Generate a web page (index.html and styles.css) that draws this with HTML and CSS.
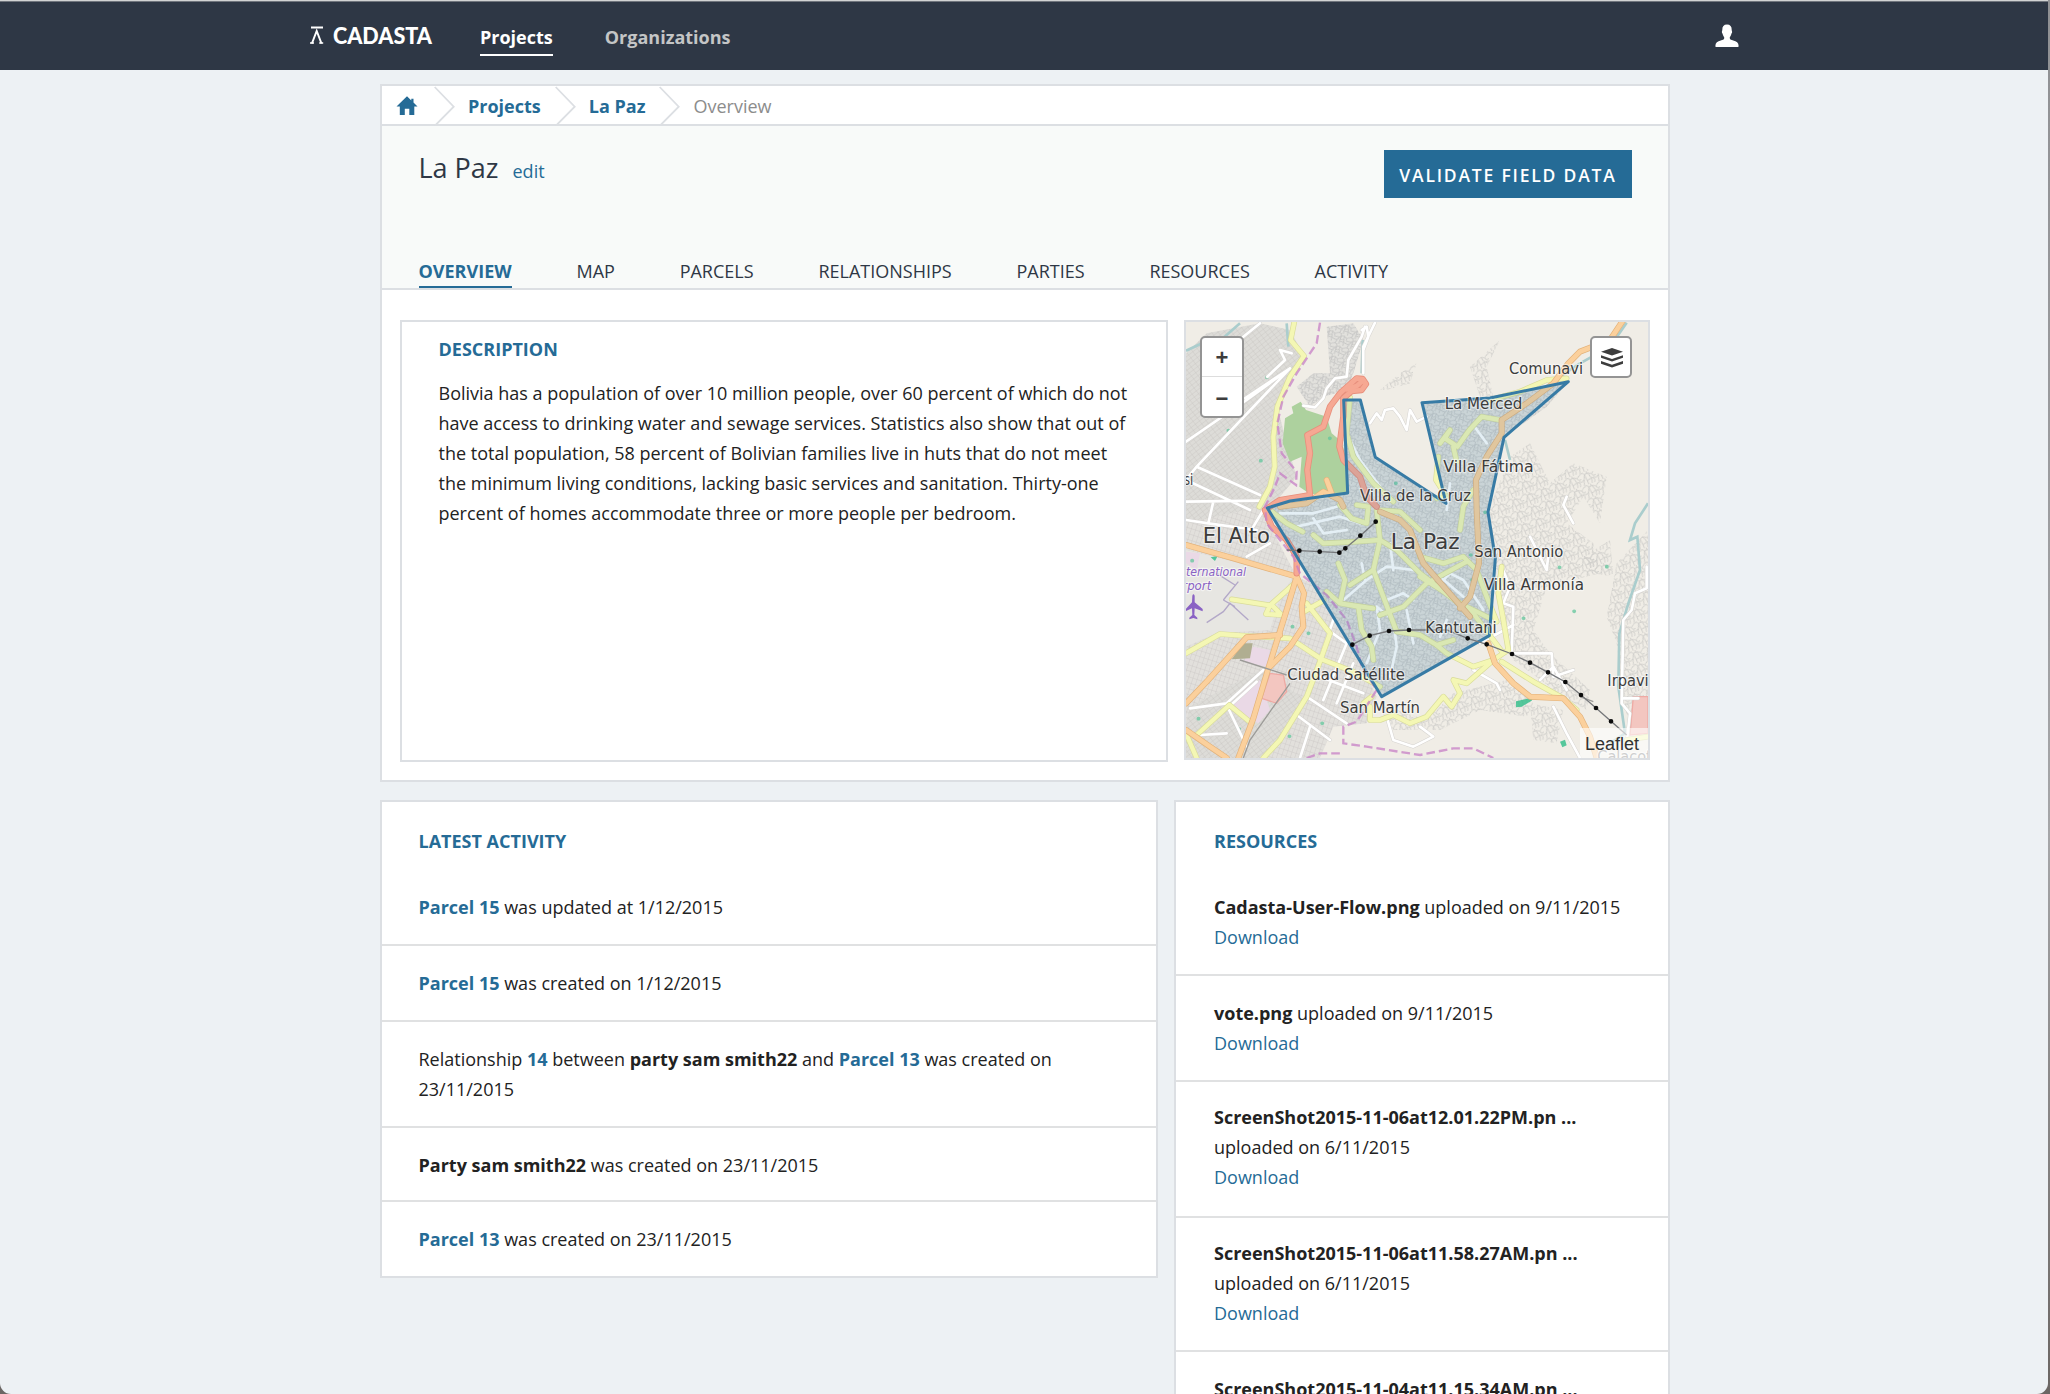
FILE: index.html
```
<!DOCTYPE html>
<html lang="en">
<head>
<meta charset="utf-8">
<title>La Paz - Cadasta</title>
<link rel="stylesheet" href="styles.css">
</head>
<body>
<div class="window">
  <header class="topbar">
    <svg class="logo" viewBox="0 0 124 20" width="124" height="20">
      <path d="M1 2.600h12" stroke="#fff" stroke-width="2" fill="none"/>
      <path d="M1.900 18.500L6.700 6L11.500 18.500" stroke="#fff" stroke-width="2" fill="none"/>
      <path d="M0 18h4M9.200 18h4" stroke="#fff" stroke-width="1.400" fill="none"/>
      <text x="23" y="18.500" textLength="99" lengthAdjust="spacingAndGlyphs" class="logo-text">CADASTA</text>
    </svg>
    <nav class="topnav">
      <a class="topnav-link active">Projects</a>
      <a class="topnav-link">Organizations</a>
    </nav>
    <svg class="user" viewBox="0 0 24 24" width="24" height="24">
      <path fill="#fff" d="M12 .5c3.200 0 4.800 2 4.700 5.300 0 1 .5 1.200.4 2.400-.1 1-.7 1.200-.9 2.200-.3 1.500-1.600 2.300-1.500 3.700.1 1.700 1.700 2 3.500 2.400 3.300.700 5.400 2.300 5.400 5.200 0 .9-.2 1.300-.8 1.300H1.200c-.6 0-.8-.4-.8-1.300 0-2.900 2.100-4.500 5.400-5.200 1.800-.4 3.400-.7 3.500-2.400.1-1.400-1.200-2.200-1.500-3.700-.2-1-.8-1.200-.9-2.200-.1-1.200.4-1.400.4-2.400C7.200 2.500 8.800.5 12 .5z"/>
    </svg>
  </header>

  <main class="page">
    <section class="panel">
      <nav class="crumbs">
        <svg class="home" viewBox="0 0 22 20" width="22" height="20"><path fill="#256b96" d="M11 .3l4.300 4.100V2.800h2.200v3.700L21.500 10.500h-3.200V19h-5v-6.200H8.800V19H3.800v-8.500H.5z"/></svg>
        <svg class="chev" viewBox="0 0 21 40" width="21" height="40"><path d="M.7 1L19.700 20.700L.7 40" fill="none" stroke="#dcdfe3" stroke-width="1.800"/></svg>
        <a class="crumb">Projects</a>
        <svg class="chev" viewBox="0 0 21 40" width="21" height="40"><path d="M.7 1L19.700 20.700L.7 40" fill="none" stroke="#dcdfe3" stroke-width="1.800"/></svg>
        <a class="crumb">La Paz</a>
        <svg class="chev" viewBox="0 0 21 40" width="21" height="40"><path d="M.7 1L19.700 20.700L.7 40" fill="none" stroke="#dcdfe3" stroke-width="1.800"/></svg>
        <span class="crumb-current">Overview</span>
      </nav>
      <div class="project-head">
        <div class="title-row">
          <h1 class="title">La Paz<a class="edit">edit</a></h1>
          <a class="btn">VALIDATE FIELD DATA</a>
        </div>
        <nav class="tabs">
          <a class="tab active">OVERVIEW</a><a class="tab">MAP</a><a class="tab">PARCELS</a><a class="tab">RELATIONSHIPS</a><a class="tab">PARTIES</a><a class="tab">RESOURCES</a><a class="tab">ACTIVITY</a>
        </nav>
      </div>
      <div class="overview">
        <div class="description">
          <h2 class="heading">DESCRIPTION</h2>
          <p class="copy">Bolivia has a population of over 10 million people, over 60 percent of which do not<br>have access to drinking water and sewage services. Statistics also show that out of<br>the total population, 58 percent of Bolivian families live in huts that do not meet<br>the minimum living conditions, lacking basic services and sanitation. Thirty-one<br>percent of homes accommodate three or more people per bedroom.</p>
        </div>
        <div class="map">
          <svg class="map-canvas" viewBox="18 36 1386 1308" width="462" height="436">
            <defs>
              <pattern id="gridA" width="16" height="11" patternUnits="userSpaceOnUse" patternTransform="rotate(-38)"><rect width="16" height="11" fill="#dddcd8"/><path d="M0 0H16M0 0V11" stroke="#c4c3c0" stroke-width="2"/></pattern>
              <pattern id="gridB" width="13" height="17" patternUnits="userSpaceOnUse" patternTransform="rotate(18)"><rect width="13" height="17" fill="#e2e0dc"/><path d="M0 0H13M0 0V17" stroke="#c6c5c2" stroke-width="2"/></pattern>
              <pattern id="gridC" width="62" height="54" patternUnits="userSpaceOnUse" patternTransform="rotate(24) scale(.62)"><rect width="62" height="54" fill="#e2e1dd"/><path d="M0 4L14 0L20 12L34 8L48 14L62 4M6 54L10 34L20 12L24 54M10 34L0 40M62 40L42 36L24 40M14 0L18 0M34 8L42 36L46 54M48 14L54 28L62 24M0 24L16 22M24 30L38 24" stroke="#c3c3c1" stroke-width="4" fill="none"/></pattern>
              <pattern id="gridD" width="76" height="66" patternUnits="userSpaceOnUse" patternTransform="rotate(-20) scale(.6)"><path d="M0 6L16 2L22 14L40 10L58 20L76 6M4 66L12 38L22 14L28 66M12 38L0 44M76 44L50 40L28 46M40 10L50 40L46 66M58 20L64 34L76 30M33 12L36 0M60 66L64 50L56 42" stroke="#cfcdca" stroke-width="4.500" fill="none"/></pattern>
              <g id="yellow-roads">
                <path d="M344 30L332 90L372 138L330 200L292 290L280 380L284 470L270 530L238 590"/>
                <path d="M18 1030L120 972L205 978L330 985L425 1048L520 1085L600 1130"/>
                <path d="M155 868L270 886L350 815M270 886L258 912L305 915L276 886M372 905L430 872"/>
                <path d="M380 880L450 970L418 1060L380 1160L300 1290L250 1344"/>
                <path d="M50 1275L148 1185L215 1240M18 1270L50 1344"/>
                <path d="M262 594L320 640L368 665M400 675L430 700L530 695L600 690L650 720L720 790L830 875L930 925"/>
                <path d="M510 262L500 370L520 440L580 520L640 575"/>
                <path d="M480 585L515 625L560 640L565 590L530 585M590 600L660 605L720 660M590 600L600 690L580 780L610 860L650 965L720 975L770 1005L820 990"/>
                <path d="M475 760L495 810L480 880L535 890L545 960L575 1010L580 1050M510 825L580 780M440 845L480 880L580 895M600 915L670 890L740 820L860 755"/>
                <path d="M780 400L810 360L795 385L832 410L868 360L905 320L960 330M820 410L830 455M775 440L768 510L800 560L770 565M880 540L850 590L840 660"/>
                <path d="M720 740L790 760L850 740L890 780L920 860L950 935"/>
                <path d="M720 800L800 850L880 910L970 1030M965 770L955 850L970 930L985 1020L940 1050L880 1070L800 1030L770 1005"/>
                <path d="M940 1050L860 1120L820 1110L840 1150L815 1190L790 1160L740 1220L690 1240L640 1215L600 1230L570 1230L570 1190L550 1180L575 1160"/>
                <path d="M965 1055L1060 1115L1150 1165L1190 1200M1340 1290L1404 1280"/>
                <path d="M930 270L1020 245L1100 210L1160 205"/>
              </g>
              <g id="orange-roads">
                <path d="M18 705L160 745L350 800L372 850L365 890L370 950L330 1010L270 1070"/>
                <path d="M350 800L320 900L265 1075L220 1225L175 1344"/>
                <path d="M18 1180L80 1115L200 982L300 975M18 1260L90 1310L140 1344"/>
                <path d="M300 590L380 580L430 545L480 570L490 590M440 510L455 550"/>
                <path d="M1330 30L1290 90L1200 125L1165 160L1120 220L1040 280L965 330L965 370L920 440L888 510L890 600L897 760L870 860L840 895"/>
                <path d="M600 605L660 630L690 660L730 760L800 840L870 920"/>
                <path d="M925 1000L945 1060L1000 1120L1050 1160L1150 1165L1200 1220L1230 1280L1250 1344"/>
              </g>
              <g id="red-roads">
                <path d="M390 555L382 480L390 430L382 375L430 350L450 290L480 250L530 205L548 207L558 222L545 240L515 243L490 265L490 320L478 410L490 450L540 500L560 560L590 590"/>
                <path d="M500 238L530 228L545 215"/>
                <path d="M390 555L300 570L255 600L275 650L320 690L350 740L350 790"/>
              </g>
              <g id="white-roads">
                <path d="M18 395L200 270L330 175L50 470L18 510M195 265L330 175M50 470L240 555M18 510L210 600M18 575L240 572M100 575L85 640L18 630M85 640L230 660M240 40L190 80M250 600L220 650M262 200L315 150L300 120L335 130"/>
                <path d="M555 50L545 80L505 150L500 200L465 205L440 235L430 265L405 292L370 287M545 60L560 50L565 80L550 120M585 38L550 110L550 190"/>
                <path d="M570 340L590 310L605 330L615 300L640 295L660 320L680 360L690 300L710 335L740 320"/>
                <path d="M30 1195L140 1180L250 1080M120 1215L230 1115M60 1275L140 1270M140 1185L200 1310M200 740L270 700"/>
                <path d="M460 930L380 1160M500 1000L430 1170M520 1060L470 1180M430 950L500 1000M420 1100L550 1150M380 1160L500 1240M350 1215L450 1290M390 1250L360 1344"/>
                <path d="M965 770L990 830L970 880L1000 890L995 1030M900 1000L1000 945M1400 770L1400 835L1365 850L1355 900L1330 930L1325 1180L1350 1210L1342 1280M1330 1165H1375"/>
                <path d="M880 1080L950 1120L960 1140M1000 1030L1115 1030L1120 1100L1180 1080M1080 1110L1120 1070L1160 1140M1120 1190L1160 1270L1200 1344M1160 560L1150 585L1180 640M1050 680L1100 780L1105 735"/>
                <path d="M720 1250L760 1280L720 1300M620 1220L640 1290L700 1310L720 1300"/>
              </g>
              <g id="city-roads">
                <path d="M500 320L505 380L540 450L600 530M300 610L400 610L470 590M350 650L480 620L540 640M490 870L560 810L620 770L700 780M590 890L600 960L560 1060M590 890L640 930L650 1010L630 1100M680 900L700 1000M780 820L810 790L850 810L910 900M880 345L920 400M800 600L810 520M640 780L630 700M400 625L430 670L500 660M555 810L545 760M620 870L670 850L700 870M780 800L850 860M800 930L780 980"/>
              </g>
            </defs>
            <rect x="18" y="36" width="1386" height="1308" fill="#f0ede6"/>
            <path fill="url(#gridA)" d="M18 130L80 70L240 40L330 60L372 138L350 180L292 290L320 400L350 500L300 560L240 600L18 640z"/>
            <path fill="url(#gridB)" d="M18 640L240 590L350 800L440 840L590 1160L560 1240L460 1250L420 1344H18z"/>
            <path fill="url(#gridA)" d="M30 1190L240 1080L380 1170L330 1250L240 1344H18V1240z"/>
            <path fill="url(#gridC)" d="M262 594L490 555L490 270L540 270L586 442L800 578L726 278L930 264L1165 215L1100 290L972 382L924 606L946 745L928 977L605 1160z"/>
            <path fill="url(#gridC)" d="M440 50L520 40L550 90L520 190L500 240L430 260L390 290L350 230L400 190L450 190z"/>
            <path fill="url(#gridD)" d="M924 606L990 440L1050 400L1110 520L1180 460L1280 500L1260 640L1210 560L1160 640L1240 700L1260 790L1100 830L1060 960L1110 1030L1230 1140L1220 1200L1150 1160L1000 1050L960 940L946 745z"/>
            <path fill="url(#gridD)" d="M1280 920L1310 760L1404 660V1230L1340 1220L1310 1000zM600 240L660 190L710 160L690 220L620 240zM870 170L960 90L920 170L940 260H900zM1210 740L1290 690L1300 800L1240 790z"/>
            <path fill="url(#gridD)" d="M590 1180L740 1230L820 1150L980 1110L1060 1180L1040 1220L900 1200L780 1260L640 1260zM1050 1180L1150 1200L1130 1300L1060 1290z"/>
            <path fill="#e7e6e2" d="M18 720L340 800L300 860L270 960L110 970L18 1010z"/>
            <path fill="#ead9e6" d="M220 1010L270 1020L260 1070L190 1055zM200 1130L240 1110L270 1200L235 1240L145 1195zM18 725L60 730L50 780L18 760z"/>
            <path fill="#b0ae91" d="M190 1000L218 1000L210 1045L155 1048z"/>
            <path fill="#f3c6c0" stroke="#eeaaa4" stroke-width="4" d="M270 1090L310 1095L320 1145L290 1180L245 1165zM1360 1160L1404 1160V1270L1350 1275z"/>
            <path fill="#add19e" d="M362 275L378 300L440 320L455 370L485 395L500 450V548L440 552L390 552L358 530L365 440L330 455L308 400L315 325L340 310L335 290z"/>
            <g fill="none" stroke="#aacdcd" stroke-width="8"><path d="M18 122L70 98L120 92L180 40M1340 38L1290 110L1200 160L1140 200M548 90L545 190M1404 580L1365 640L1350 690L1372 680L1380 780L1345 880L1318 970L1315 1130L1335 1270L1290 1300M975 390L990 450M320 40L325 110" /></g>
            <g fill="none" stroke="#b3a8c8" stroke-width="4"><path d="M80 938L130 905L150 880L205 930M130 870L175 815M130 870L165 890M110 790L165 825"/></g>
            <path fill="#39bf8d" d="M92 742L113 738L105 753zM1008 1174L1060 1162L1055 1172L1025 1190L1008 1192zM1140 1295L1155 1289L1160 1306L1147 1312z" opacity=".85"/>
            <path stroke="#63c79d" stroke-width="11" stroke-linecap="round" d="M145 362h1M242 452h1M260 202h1M36 752h1M337 950h1M385 970h1M55 1226h1M177 1257h1M328 1279h1M426 1240h1M449 385h1M647 520h1M632 928h1M872 735h1M876 810h1M1138 772h1M1280 770h1M1182 904h1M1030 925h1M915 607h1" opacity=".75"/>
            <use href="#white-roads" class="white-case"/><use href="#white-roads" class="white-line"/>
            <use href="#city-roads" class="city-line"/>
            <use href="#yellow-roads" class="yellow-case"/><use href="#yellow-roads" class="yellow-line"/>
            <use href="#orange-roads" class="orange-case"/><use href="#orange-roads" class="orange-line"/>
            <use href="#red-roads" class="red-case"/><use href="#red-roads" class="red-line"/>
            <path fill="none" stroke="#9c9b98" stroke-width="4" d="M180 1050L320 1095M330 1120L210 1290L190 1344M1200 1160L1240 1175"/>
            <path class="boundary" d="M420 38L410 100L350 190L310 260L292 340L305 430L350 485L348 525L300 490L285 530L255 590L260 640L340 740L360 790L440 855L500 930L530 1010L545 1070L590 1140L530 1235L490 1250V1300L560 1310L720 1335L820 1315H880L940 1344M380 1344L420 1330L490 1330"/>
            <path fill="#3080b4" fill-opacity=".13" stroke="#377ba5" stroke-width="9" stroke-linejoin="round" d="M491 270L541 270L586 442L798 580L726 278L930 264L1165 215L972 382L924 606L946 745L928 977L605 1160L262 594L330 573L503 549z"/>
            <g fill="none" stroke="#75777a" stroke-width="4"><path d="M320 720L358 722L419 725L478 728L496 715L541 677L587 635M517 1004L569 977L627 963L687 960L800 960L863 985L920 1003L996 1032L1050 1058L1104 1087L1156 1116L1203 1155L1248 1194L1293 1234L1340 1275"/></g>
            <path stroke="#0b0b0b" stroke-width="14" stroke-linecap="round" d="M358 722h.1M419 725h.1M478 728h.1M496 715h.1M541 677h.1M587 635h.1M517 1004h.1M569 977h.1M627 963h.1M687 960h.1M863 985h.1M920 1003h.1M996 1032h.1M1050 1058h.1M1104 1087h.1M1156 1116h.1M1203 1155h.1M1248 1194h.1M1293 1234h.1"/>
            <path fill="#8a62c4" transform="translate(0 -8)" d="M37 865q3-8 7 0v20l24 20v7l-24-9-1 20 9 8v5l-12-4-12 4v-5l9-8-1-20-18 8v-7l18-19z"/>
            <g class="places">
              <text x="-28" y="526" textLength="68" lengthAdjust="spacingAndGlyphs">ussi</text>
              <text x="68" y="699" textLength="202" lengthAdjust="spacingAndGlyphs" class="big">El Alto</text>
              <text x="632" y="716" textLength="207" lengthAdjust="spacingAndGlyphs" class="big">La Paz</text>
              <text x="987" y="193" textLength="222" lengthAdjust="spacingAndGlyphs">Comunavi</text>
              <text x="794" y="298" textLength="233" lengthAdjust="spacingAndGlyphs">La Merced</text>
              <text x="790" y="485" textLength="271" lengthAdjust="spacingAndGlyphs">Villa Fátima</text>
              <text x="540" y="574" textLength="333" lengthAdjust="spacingAndGlyphs">Villa de la Cruz</text>
              <text x="883" y="742" textLength="267" lengthAdjust="spacingAndGlyphs">San Antonio</text>
              <text x="911" y="841" textLength="301" lengthAdjust="spacingAndGlyphs">Villa Armonía</text>
              <text x="736" y="968" textLength="214" lengthAdjust="spacingAndGlyphs">Kantutani</text>
              <text x="322" y="1111" textLength="353" lengthAdjust="spacingAndGlyphs">Ciudad Satéllite</text>
              <text x="480" y="1209" textLength="240" lengthAdjust="spacingAndGlyphs">San Martín</text>
              <text x="1282" y="1129" textLength="124" lengthAdjust="spacingAndGlyphs">Irpavi</text>
              <text x="1252" y="1356" textLength="190" lengthAdjust="spacingAndGlyphs" class="faded">Calacoto</text>
              <text x="-3" y="797" textLength="201" lengthAdjust="spacingAndGlyphs" class="airport">nternational</text>
              <text x="-3" y="839" textLength="97" lengthAdjust="spacingAndGlyphs" class="airport">irport</text>
            </g>
          </svg>
          <div class="zoom-control"><a class="zoom-btn">+</a><a class="zoom-btn minus">−</a></div>
          <div class="layers">
            <svg viewBox="0 0 22 20" width="22" height="20" fill="#3d3d3d"><path d="M11 0L22 3.800L11 7.600L0 3.800zM0 7.200L11 11L22 7.200V9.800L11 13.600L0 9.800zM0 13L11 16.800L22 13V15.700L11 19.500L0 15.700z"/></svg>
          </div>
          <div class="attribution">Leaflet</div>
        </div>
      </div>
    </section>

    <div class="columns">
      <section class="panel feed activity">
        <h2 class="heading">LATEST ACTIVITY</h2>
        <p class="item"><a>Parcel 15</a> was updated at 1/12/2015</p>
        <p class="item"><a>Parcel 15</a> was created on 1/12/2015</p>
        <p class="item">Relationship <a>14</a> between <b>party sam smith22</b> and <a>Parcel 13</a> was created on 23/11/2015</p>
        <p class="item tight"><b>Party sam smith22</b> was created on 23/11/2015</p>
        <p class="item"><a>Parcel 13</a> was created on 23/11/2015</p>
      </section>
      <section class="panel feed resources">
        <h2 class="heading">RESOURCES</h2>
        <p class="item"><b>Cadasta-User-Flow.png</b> uploaded on 9/11/2015<br><span class="download">Download</span></p>
        <p class="item"><b>vote.png</b> uploaded on 9/11/2015<br><span class="download">Download</span></p>
        <p class="item raised"><b>ScreenShot2015-11-06at12.01.22PM.pn ...</b><br>uploaded on 6/11/2015<br><span class="download">Download</span></p>
        <p class="item raised short"><b>ScreenShot2015-11-06at11.58.27AM.pn ...</b><br>uploaded on 6/11/2015<br><span class="download">Download</span></p>
        <p class="item"><b>ScreenShot2015-11-04at11.15.34AM.pn ...</b><br>uploaded on 4/11/2015<br><span class="download">Download</span></p>
      </section>
    </div>
  </main>
</div>
</body>
</html>
```
FILE: styles.css
```
* { box-sizing: border-box; }
html, body { margin: 0; height: 1394px; overflow: hidden; }
body {
  background: linear-gradient(#8f9093, #a5a6a8 60%, #6b6663);
  font: 18px/30px "Open Sans", "Noto Sans", sans-serif;
  color: #222;
}
h1, h2, p { margin: 0; }
.window {
  width: 2048px;
  height: 1394px;
  overflow: hidden;
  background: #edf1f4;
  border-top: 1px solid #d2d3d3;
  border-radius: 0 0 11px 11px;
}
.topbar {
  height: 69px;
  background: #2e3745;
  border-top: 1px solid #70757d;
  padding-left: 310px;
  display: flex;
  align-items: flex-start;
}
.logo { margin-top: 23px; flex: none; }
.logo-text { font: 900 23px Lato, sans-serif; fill: #fff; }
.topnav { display: flex; gap: 52px; margin: 20px 0 0 46px; }
.topnav-link { font-weight: 700; color: #c4c5c6; height: 34px; }
.topnav-link.active { color: #fff; border-bottom: 2px solid #fff; }
.user { margin: 22px 0 0 auto; margin-right: 309px; }
.page { width: 1290px; margin: 14px 0 0 380px; }
.panel { background: #fff; border: 2px solid #dcdfe3; }
.crumbs {
  height: 40px;
  border-bottom: 2px solid #dcdfe3;
  display: flex;
  align-items: flex-start;
  padding-left: 14px;
}
.home { margin: 10px 16px 0 0; }
.chev { flex: none; }
.crumb, .crumb-current { line-height: 40px; margin: 0 14px 0 13px; }
.crumb { font-weight: 700; color: #256b96; }
.crumb-current { color: #8c8c8c; }
.project-head {
  height: 164px;
  background: #f8faf9;
  border-bottom: 2px solid #dcdfe3;
  padding: 24px 36px 0 36.500px;
  display: flex;
  flex-direction: column;
  justify-content: space-between;
}
.title-row { display: flex; justify-content: space-between; }
.title { font-weight: 400; font-size: 27px; line-height: 36px; color: #2e3745; }
.edit { font-size: 18px; color: #256b96; margin-left: 14px; }
.btn {
  width: 248px;
  height: 48px;
  background: #256b96;
  color: #fff;
  font-weight: 600;
  font-size: 17.500px;
  letter-spacing: 1.800px;
  line-height: 50px;
  text-align: center;
}
.tabs { display: flex; gap: 64.800px; height: 32px; color: #2e3745; }
.tab { height: 32px; line-height: 30px; }
.tab.active { font-weight: 700; color: #256b96; border-bottom: 2px solid #256b96; }
.overview { height: 490px; padding: 30px 18px 0; display: flex; gap: 16px; align-items: flex-start; }
.description { width: 768px; height: 442px; border: 2px solid #dcdfe3; padding: 12px 36.500px; }
.heading { font-size: 18px; line-height: 30px; font-weight: 700; color: #256b96; }
.copy { margin-top: 14px; white-space: nowrap; }
.map { position: relative; width: 466px; height: 440px; border: 2px solid #dcdfe3; overflow: hidden; }
.map-canvas { display: block; }
.white-case, .white-line, .city-line, .yellow-case, .yellow-line, .orange-case, .orange-line, .red-case, .red-line {
  fill: none;
  stroke-linejoin: round;
  stroke-linecap: round;
}
.white-case { stroke: #d6d4d1; stroke-width: 11; }
.white-line { stroke: #fff; stroke-width: 8; }
.city-line { stroke: #fff; stroke-width: 8; }
.yellow-case { stroke: #d9dc9b; stroke-width: 17; }
.yellow-line { stroke: #f4f7b4; stroke-width: 13; }
.orange-case { stroke: #e3b27a; stroke-width: 18; }
.orange-line { stroke: #fbd09c; stroke-width: 14; }
.red-case { stroke: #e78f7c; stroke-width: 19; }
.red-line { stroke: #f6a893; stroke-width: 14; }
.boundary { fill: none; stroke: #c77fc6; stroke-width: 7; stroke-dasharray: 26 12; opacity: .75; }
.places text {
  font-family: "DejaVu Sans", sans-serif;
  font-size: 46px;
  fill: #3c3c3c;
  stroke: #fff;
  stroke-opacity: .55;
  stroke-width: 7px;
  stroke-linejoin: round;
  paint-order: stroke;
}
.places .big { font-size: 62px; }
.places .airport { font-size: 35px; font-style: italic; fill: #8a62c4; }
.places .faded { fill: #888; }
.zoom-control {
  position: absolute;
  left: 14px;
  top: 14px;
  width: 44px;
  height: 82px;
  background: #fff;
  border: 2px solid #949494;
  border-radius: 5px;
}
.zoom-btn {
  display: block;
  height: 39px;
  border-bottom: 1px solid #ddd;
  text-align: center;
  font: bold 22px/40px "Liberation Sans", sans-serif;
  color: #3d3d3d;
}
.zoom-btn.minus { border: 0; line-height: 44px; }
.layers {
  position: absolute;
  right: 16px;
  top: 14px;
  width: 42px;
  height: 42px;
  background: #fff;
  border: 2px solid #949494;
  border-radius: 5px;
  padding: 2px 0 0 1px;
  display: flex;
  align-items: center;
  justify-content: center;
}
.attribution {
  position: absolute;
  right: 0;
  bottom: 0;
  height: 30px;
  padding: 0 9px 0 5px;
  background: rgba(255, 255, 255, .6);
  font: 18px/32px "Liberation Sans", sans-serif;
  color: #333;
}
.columns { display: flex; gap: 16px; margin-top: 18px; align-items: flex-start; }
.activity { width: 778px; }
.resources { width: 496px; }
.feed .heading { padding: 24px 36.500px 14px; }
.item { padding: 22px 36.500px; border-bottom: 2px solid #e0e1e2; }
.item:last-child { border-bottom: 0; }
.item.tight { padding-bottom: 20px; }
.item.raised { padding-top: 20px; padding-bottom: 24px; }
.item.raised.short { padding-bottom: 22px; }
.resources .heading, .resources .item { padding-left: 38px; }
.item a { color: #256b96; font-weight: 700; }
.download { color: #256b96; }
```
